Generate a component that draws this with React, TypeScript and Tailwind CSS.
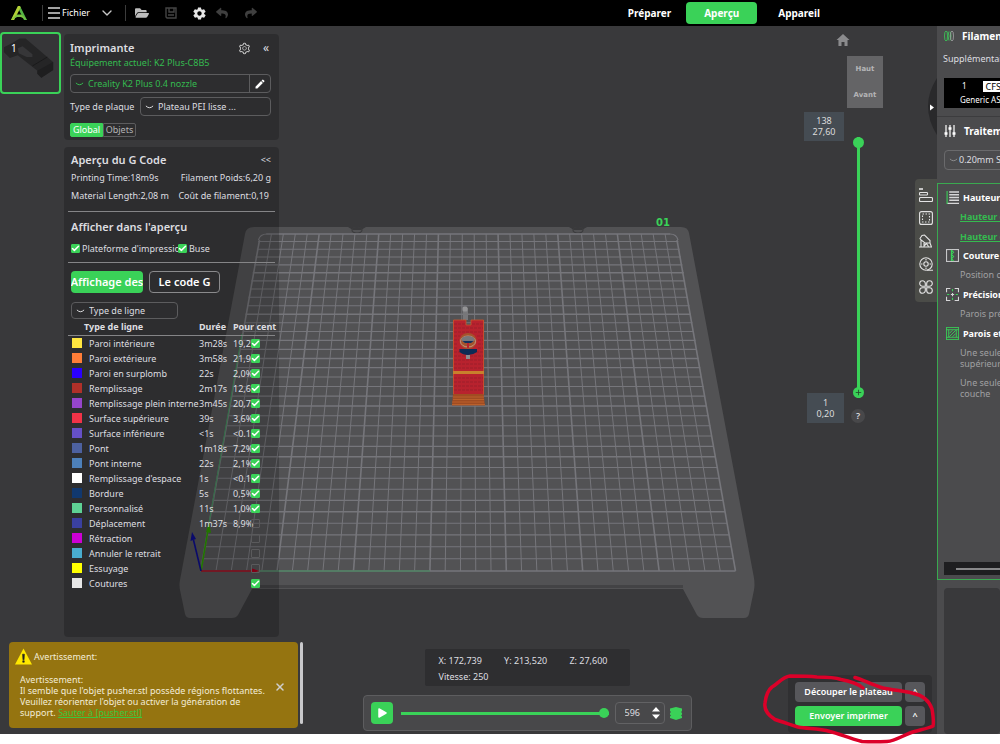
import clsx from 'clsx';
import { Check, ChevronDown, X } from 'lucide-react';
import React, { useState } from 'react';
import { AiOutlineSetting } from 'react-icons/ai';
import { FaFolderOpen, FaReply, FaShare } from 'react-icons/fa';
import { IoMdHome, IoMdSettings } from 'react-icons/io';
import { MdEdit } from 'react-icons/md';

type LineType = {
  label: string;
  color: string;
  time?: string;
  percent?: string;
  shown: boolean;
};

const lineTypes: LineType[] = [
  { label: 'Paroi intérieure', color: 'bg-[#ffe640]', time: '3m28s', percent: '19,2%', shown: true },
  { label: 'Paroi extérieure', color: 'bg-[#ff7d38]', time: '3m58s', percent: '21,9%', shown: true },
  { label: 'Paroi en surplomb', color: 'bg-[#2a00ff]', time: '22s', percent: '2,0%', shown: true },
  { label: 'Remplissage', color: 'bg-[#b03029]', time: '2m17s', percent: '12,6%', shown: true },
  { label: 'Remplissage plein interne', color: 'bg-[#9645cc]', time: '3m45s', percent: '20,7%', shown: true },
  { label: 'Surface supérieure', color: 'bg-[#f03347]', time: '39s', percent: '3,6%', shown: true },
  { label: 'Surface inférieure', color: 'bg-[#6650c7]', time: '<1s', percent: '<0.1%', shown: true },
  { label: 'Pont', color: 'bg-[#4d619f]', time: '1m18s', percent: '7,2%', shown: true },
  { label: 'Pont interne', color: 'bg-[#4d80ba]', time: '22s', percent: '2,1%', shown: true },
  { label: "Remplissage d'espace", color: 'bg-white', time: '1s', percent: '<0.1%', shown: true },
  { label: 'Bordure', color: 'bg-[#11386e]', time: '5s', percent: '0,5%', shown: true },
  { label: 'Personnalisé', color: 'bg-[#5ed194]', time: '11s', percent: '1,0%', shown: true },
  { label: 'Déplacement', color: 'bg-[#3a40a0]', time: '1m37s', percent: '8,9%', shown: false },
  { label: 'Rétraction', color: 'bg-[#cd00d6]', shown: false },
  { label: 'Annuler le retrait', color: 'bg-[#49adcf]', shown: false },
  { label: 'Essuyage', color: 'bg-[#ffff00]', shown: false },
  { label: 'Coutures', color: 'bg-[#e6e6e6]', shown: true },
];

const CELLS = 35;
const FAR = { y: 234, left: 259.5, right: 677 };
const NEAR = { y: 571, left: 200.7, right: 735.5 };

// y of the n-th row line, counted from the far edge of the bed
function rowY(n: number) {
  const t = n / CELLS;
  const far = FAR.right - FAR.left;
  const near = NEAR.right - NEAR.left;
  const w = 1 / ((1 - t) / far + t / near);
  return FAR.y + ((w - far) / (near - far)) * (NEAR.y - FAR.y);
}

function lerp(a: number, b: number, t: number) {
  return a + (b - a) * t;
}

function Scene() {
  const steps = Array.from({ length: CELLS + 1 }, (_, i) => i);
  return (
    <svg
      className="absolute inset-0 h-full w-full"
      viewBox="0 26 1000 708"
      preserveAspectRatio="xMidYMid slice"
      aria-hidden="true"
    >
      <path
        d="M254 227H348L353 230H361L366 227H569L574 230H582L587 227H681Q688 227 689 233L754 578Q755 585 754 590L749 614Q748 618 744 618H703Q699 618 697 615L683 589H252L238 615Q236 618 232 618H190Q186 618 185 614L180 590Q179 585 180 580L245 234Q246 227 254 227Z"
        fill="#525254"
      />
      <path d="M252 585H683V588H252Z" fill="#434345" />
      <ellipse cx="357" cy="230" rx="5" ry="3" fill="none" stroke="#3c3c3e" strokeWidth="1.2" />
      <ellipse cx="578" cy="230" rx="5" ry="3" fill="none" stroke="#3c3c3e" strokeWidth="1.2" />
      <g stroke="#76767b">
        {steps.map((i) => {
          const t = i / CELLS;
          return (
            <line
              key={`c${i}`}
              x1={lerp(FAR.left, FAR.right, t)}
              y1={i === 0 || i === CELLS ? 240 : FAR.y}
              x2={lerp(NEAR.left, NEAR.right, t)}
              y2={NEAR.y}
              strokeWidth={i % 5 === 0 ? 1.6 : 1}
            />
          );
        })}
        {steps.map((i) => {
          const y = rowY(i);
          const t = (y - FAR.y) / (NEAR.y - FAR.y);
          const inset = i === 0 ? 7 : 0;
          return (
            <line
              key={`r${i}`}
              x1={lerp(FAR.left, NEAR.left, t) + inset}
              y1={y}
              x2={lerp(FAR.right, NEAR.right, t) - inset}
              y2={y}
              strokeWidth={i % 5 === 0 ? 1.5 : 1.1}
            />
          );
        })}
        <path d="M258.5 240Q260 234 267 234M678 240Q676.500 234 670 234" fill="none" strokeWidth="1.2" />
      </g>
      <path d="M200.700 571L242 334M200 571H430" stroke="#3d8a58" strokeWidth="1" />
      <path d="M201 571L208 530" stroke="#2c9000" strokeWidth="1.600" />
      <path d="M206 532L209 522L211 533Z" fill="#2c9000" />
      <path d="M201 571H256" stroke="#a3001c" strokeWidth="1.600" />
      <path d="M252 568.500L260 571L252 573Z" fill="#a3001c" />
      <path d="M201 571L193.500 540" stroke="#0d0d86" strokeWidth="1.600" />
      <path d="M190.500 541L192 532L196 539Z" fill="#0d0d86" />
      <text
        x="656"
        y="226"
        fontSize="10"
        fontWeight="700"
        fill="#3ad258"
        className="font-['DejaVu_Sans',sans-serif]"
      >
        01
      </text>

      <rect x="463" y="308" width="5" height="12" fill="#77777a" />
      <rect x="462.500" y="306.500" width="5" height="5" rx="1.500" fill="#949496" />
      <path d="M453 320H466V325H471V320H484V395H453Z" fill="#b8222e" />
      <path
        d="M454 324H466M472 324H483M454 328H483M454 332H483M454 336H460M477 336H483M454 340H459M478 340H483M454 344H458M478 344H483M454 348H458M478 348H483M454 352H460M476 352H483M454 356H483M454 360H483M454 364H483M454 368H483M454 378H483M454 382H483M454 386H483M454 390H483"
        stroke="#9c1f2b"
        strokeWidth="1"
        strokeDasharray="3 1"
      />
      <path d="M453.500 395V320H466V325H471V320H483.500V395" fill="none" stroke="#c9552c" strokeWidth=".8" />
      <ellipse cx="468" cy="341" rx="8.500" ry="8" fill="#a4532c" />
      <path d="M459.500 349H477V352Q473 355 468 355Q463 355 459.500 352Z" fill="#0d2b55" />
      <ellipse cx="468" cy="341.500" rx="7.500" ry="5.500" fill="none" stroke="#c9a39a" strokeWidth=".8" />
      <ellipse cx="468" cy="339.500" rx="6.500" ry="3.500" fill="#77777a" />
      <path d="M462.500 341H473.500L471 343H465Z" fill="#12305c" />
      <path d="M468 343V348" stroke="#b8222e" strokeWidth="2" />
      <rect x="466" y="355" width="4" height="4" fill="#8d8d90" />
      <rect x="453" y="371" width="31" height="3" fill="#c8802c" />
      <path d="M453 394H483.500L485 405.500H452Z" fill="#a04c22" />
      <path d="M453 397H484M453 399.500H484M452 402H484M452 404.500H485" stroke="#c7692e" strokeWidth=".7" />
    </svg>
  );
}

function Logo() {
  return (
    <svg viewBox="0 0 16 14" className="h-[14px] w-4" aria-hidden="true">
      <path d="M7 0H9L16 14H13L8 4L3 14H0Z" fill="#55b445" />
      <path d="M7 0H9L9.500 1.500L3 14H0Z" fill="#b5cf35" />
      <path d="M0 14L5.500 8.500H10.500L16 14L9.800 11H6.200Z" fill="#7cc242" />
    </svg>
  );
}

function Caret({ className }: { className?: string }) {
  return (
    <svg viewBox="0 0 10 4" className={clsx('h-1 w-[9px]', className)} fill="none" aria-hidden="true">
      <path d="M1 .8Q5 4.800 9 .8" stroke="currentColor" strokeWidth="1.100" />
    </svg>
  );
}

function Select({
  label,
  value,
  className,
}: {
  label: string;
  value: string;
  className?: string;
}) {
  return (
    <div className={clsx('relative flex items-center', className)}>
      <Caret className="pointer-events-none absolute left-1" />
      <select
        aria-label={label}
        defaultValue={value}
        className="h-full w-full appearance-none bg-transparent pl-[17px] outline-none"
      >
        <option>{value}</option>
      </select>
    </div>
  );
}

function Tick({
  checked,
  label,
  id,
}: {
  checked: boolean;
  label?: string;
  id?: string;
}) {
  return (
    <span className="grid h-[9px] w-[9px] shrink-0">
      <input
        id={id}
        type="checkbox"
        aria-label={label}
        defaultChecked={checked}
        className="peer col-start-1 row-start-1 h-[9px] w-[9px] appearance-none rounded-[1px] border border-[#5a5a5c] checked:border-[#3ad258] checked:bg-[#3ad258]"
      />
      <Check
        strokeWidth={4}
        className="pointer-events-none invisible col-start-1 row-start-1 h-[9px] w-[9px] text-white peer-checked:visible"
      />
    </span>
  );
}

function Header() {
  return (
    <header className="flex h-[26px] shrink-0 items-center bg-black text-white">
      <div className="flex flex-1 items-center pl-[11px]">
        <Logo />
        <span className="ml-[15px] h-4 w-px bg-[#3c3c3c]" />
        <button className="ml-[5px] flex items-center gap-[2px]">
          <svg viewBox="0 0 12 12" className="h-3 w-3" stroke="#d8d8d8" strokeWidth="1.400">
            <path d="M0 1H12M0 6H12M0 11H12" />
          </svg>
          Fichier
        </button>
        <button aria-label="Plus" className="ml-[9px]">
          <ChevronDown className="h-[16px] w-[16px] text-[#c8c8c8]" />
        </button>
        <span className="ml-[10px] h-4 w-px bg-[#3c3c3c]" />
        <button aria-label="Ouvrir" className="ml-[9px]">
          <FaFolderOpen className="h-[14px] w-[14px] text-[#bdbdbd]" />
        </button>
        <button aria-label="Enregistrer" className="ml-4">
          <svg viewBox="0 0 12 12" className="h-3 w-3" fill="none" stroke="#444" strokeWidth="1.400">
            <path d="M1 1H11V11H2L1 10Z" />
            <path d="M4 1V5H9V1M3 8H9" />
          </svg>
        </button>
        <button aria-label="Paramètres" className="ml-[15px]">
          <IoMdSettings className="h-[15px] w-[15px] text-[#e6e6e6]" />
        </button>
        <button aria-label="Annuler" className="ml-2">
          <FaReply className="h-3 w-[14px] text-[#3f3f3f]" />
        </button>
        <button aria-label="Rétablir" className="ml-[15px]">
          <FaShare className="h-3 w-[14px] text-[#3f3f3f]" />
        </button>
      </div>
      <nav className="mr-[180px] flex items-center text-[10px] font-bold">
        <a href="#preparer" className="px-[15px]">
          Préparer
        </a>
        <a
          href="#apercu"
          className="flex h-[22px] w-[71px] items-center justify-center rounded-sm bg-[#3ad258]"
        >
          Aperçu
        </a>
        <a href="#appareil" className="pl-[21px]">
          Appareil
        </a>
      </nav>
    </header>
  );
}

function PlateThumb() {
  return (
    <button className="relative mt-[6px] h-[62px] w-[61px] shrink-0 rounded-sm border-2 border-[#3ad258] bg-[#363638]">
      <svg viewBox="0 0 58 58" className="h-full w-full" aria-hidden="true">
        <path d="M2 18V13L10 9L18 4L24 4L52 28V36L40 44L36 40V37L16 21L8 24Z" fill="#252526" />
        <path d="M16 14L21 12L31 20L31 23L25 23L17 19Z" fill="#363638" />
        <path d="M36 37L52 28V36L40 44L36 40Z" fill="#1e1e1f" />
        <path d="M31 32L46 23" stroke="#1a1a1b" />
      </svg>
      <span className="absolute left-[9px] top-[6px] text-[10px] leading-4 text-white">1</span>
    </button>
  );
}

function PrinterPanel() {
  const [tab, setTab] = useState('Global');
  return (
    <section className="rounded-sm bg-black/20 pb-[3px] pl-[6px] pr-2 pt-1">
      <div className="flex h-5 items-center pr-[2px]">
        <h2 className="flex-1 text-[11px] font-semibold">Imprimante</h2>
        <button aria-label="Réglages de l'imprimante">
          <AiOutlineSetting className="h-[13px] w-[13px] text-[#c4c4c4]" />
        </button>
        <button aria-label="Réduire" className="ml-3 text-[12px] leading-3">
          «
        </button>
      </div>
      <p className="h-[10px] leading-[10px] text-[#35bb50]">Équipement actuel: K2 Plus-C8B5</p>
      <div className="mt-[6px] flex h-[19px] rounded-sm border border-[#5c5c5e]">
        <Select
          label="Imprimante"
          value="Creality K2 Plus 0.4 nozzle"
          className="flex-1 text-[#35bb50]"
        />
        <button
          aria-label="Modifier"
          className="flex w-[21px] items-center justify-center border-l border-[#5c5c5e]"
        >
          <MdEdit className="h-3 w-3 text-white" />
        </button>
      </div>
      <div className="mt-1 flex h-[19px] items-center">
        <span className="w-[70px]">Type de plaque</span>
        <Select
          label="Type de plaque"
          value="Plateau PEI lisse ..."
          className="h-full flex-1 rounded-sm border border-[#5c5c5e]"
        />
      </div>
      <div className="mt-[7px] flex h-[14px]">
        {['Global', 'Objets'].map((t) => (
          <button
            key={t}
            onClick={() => setTab(t)}
            className={clsx(
              'w-[33px] border leading-3 first:rounded-l-xs last:rounded-r-xs',
              tab === t
                ? 'border-[#3ad258] bg-[#3ad258] text-white'
                : 'border-[#5c5c5e] text-[#b4b4b6]'
            )}
          >
            {t}
          </button>
        ))}
      </div>
    </section>
  );
}

function GCodePanel() {
  return (
    <section className="mt-[7px] flex-1 rounded-sm bg-black/20 px-1 pt-1">
      <div className="flex h-[18px] items-center justify-between pl-[3px] pr-1">
        <h2 className="text-[11px] font-semibold">Aperçu du G Code</h2>
        <button className="leading-3">&lt;&lt;</button>
      </div>
      <div className="flex h-[18px] items-center justify-between pl-[3px] pr-1">
        <span>Printing Time:18m9s</span>
        <span>Filament Poids:6,20 g</span>
      </div>
      <div className="flex h-[18px] items-center justify-between pl-[3px] pr-[6px]">
        <span>Material Length:2,08 m</span>
        <span>Coût de filament:0,19</span>
      </div>
      <hr className="mt-[6px] border-[#858587]" />
      <h3 className="flex h-[30px] items-center pl-[3px] text-[11px] font-semibold">
        Afficher dans l'aperçu
      </h3>
      <div className="flex h-[13px] items-center pl-[3px]">
        <Tick id="show-bed" checked />
        <label htmlFor="show-bed" className="w-[98px] overflow-hidden whitespace-nowrap pl-[2px]">
          Plateforme d'impression
        </label>
        <Tick id="show-nozzle" checked />
        <label htmlFor="show-nozzle" className="pl-[2px]">
          Buse
        </label>
      </div>
      <hr className="mt-[7px] border-[#858587]" />
      <div className="mt-2 flex h-[22px] gap-[6px] pl-[3px] text-[11px] font-semibold text-white">
        <button className="flex w-[72px] items-center justify-center overflow-hidden whitespace-nowrap rounded-sm bg-[#3ad258]">
          Affichage des
        </button>
        <button className="w-[71px] rounded-sm border border-[#8a8a8c]">Le code G</button>
      </div>
      <Select
        label="Mode de couleur"
        value="Type de ligne"
        className="ml-[3px] mt-[9px] h-[17px] w-[107px] rounded-sm border border-[#5c5c5e]"
      />
      <table className="w-full table-fixed border-collapse whitespace-nowrap text-left">
        <colgroup>
          <col className="w-[21px]" />
          <col className="w-[110px]" />
          <col className="w-[34px]" />
          <col className="w-[18px]" />
          <col />
        </colgroup>
        <thead>
          <tr className="h-[16px] border-b border-[#858587]">
            <th colSpan={2} className="p-0 pl-4 font-bold leading-[15px]">
              Type de ligne
            </th>
            <th className="p-0 font-bold leading-[15px]">Durée</th>
            <th colSpan={2} className="p-0 font-bold leading-[15px]">
              Pour cent
            </th>
          </tr>
        </thead>
        <tbody>
          {lineTypes.map((l) => (
            <tr key={l.label} className="h-[15px]">
              <td className="p-0 pl-1">
                <span className={clsx('block h-[10px] w-[10px]', l.color)} />
              </td>
              <td className="p-0 leading-[15px]">{l.label}</td>
              <td className="p-0 leading-[15px]">{l.time}</td>
              <td className="p-0 leading-[15px]">{l.percent}</td>
              <td className="p-0">
                <Tick checked={l.shown} label={l.label} />
              </td>
            </tr>
          ))}
        </tbody>
      </table>
    </section>
  );
}

function Toast() {
  return (
    <div className="mb-[6px] mt-[5px] flex gap-[2px]">
      <div
        role="alert"
        className="relative ml-[9px] h-[86px] flex-1 rounded-sm bg-[#957410] pl-[11px] pt-[6px] text-[#f3ecd8]"
      >
        <div className="-ml-[5px] flex items-center gap-[2px]">
          <svg viewBox="0 0 18 17" className="h-[17px] w-[17px]" aria-hidden="true">
            <path d="M9 0L18 17H0Z" fill="#ffe800" />
            <path d="M8 6H10L9.600 12H8.400ZM8.200 13H9.800V14.600H8.200Z" fill="#222" stroke="#222" strokeWidth=".6" />
          </svg>
          Avertissement:
        </div>
        <p className="mt-[9px] whitespace-nowrap leading-[11px]">
          Avertissement:
          <br />
          Il semble que l'objet pusher.stl possède régions flottantes.
          <br />
          Veuillez réorienter l'objet ou activer la génération de
          <br />
          support.{' '}
          <a href="#pusher" className="text-[#3ac83c] underline">
            Sauter à [pusher.stl]
          </a>
        </p>
        <button aria-label="Fermer" className="absolute right-3 top-[39px]">
          <X strokeWidth={3} className="h-[12px] w-[12px] text-[#cfcfcf]" />
        </button>
      </div>
      <span className="h-[82px] w-[3px] rounded-full bg-[#c9c9cb]" />
    </div>
  );
}

function Playback() {
  return (
    <div className="flex flex-1 flex-col items-center justify-end pb-[3px]">
      <div className="h-[37px] w-[205px] rounded-xs bg-[#2e2e30] px-[14px] pt-1">
        <div className="flex h-4 items-center justify-between pr-2">
          <span>X: 172,739</span>
          <span>Y: 213,520</span>
          <span>Z: 27,600</span>
        </div>
        <div className="flex h-4 items-center">Vitesse: 250</div>
      </div>
      <div className="mt-[9px] flex h-[36px] w-[329px] items-center rounded-sm border border-[#5d5d5f] bg-[#48484a] pl-[7px] pr-[9px]">
        <button
          aria-label="Lecture"
          className="flex h-[22px] w-[22px] items-center justify-center rounded-sm bg-[#3ad258]"
        >
          <svg viewBox="0 0 10 10" className="h-[10px] w-[10px]" aria-hidden="true">
            <path d="M2 1L9 5L2 9Z" fill="white" stroke="white" strokeWidth="1.500" strokeLinejoin="round" />
          </svg>
        </button>
        <input
          type="range"
          aria-label="Progression"
          defaultValue={100}
          className="ml-2 h-[10px] min-w-0 flex-1 appearance-none bg-transparent [&::-webkit-slider-runnable-track]:h-[3px] [&::-webkit-slider-runnable-track]:bg-[#3ad258] [&::-webkit-slider-thumb]:-mt-[4px] [&::-webkit-slider-thumb]:h-[10px] [&::-webkit-slider-thumb]:w-[10px] [&::-webkit-slider-thumb]:appearance-none [&::-webkit-slider-thumb]:rounded-full [&::-webkit-slider-thumb]:bg-[#3ad258]"
        />
        <div className="ml-[6px] flex h-[22px] w-[50px] items-center rounded-sm border border-[#626264] pr-1">
          <input
            aria-label="Étape"
            defaultValue="596"
            className="w-full min-w-0 bg-transparent pl-[9px] outline-none"
          />
          <svg viewBox="0 0 8 12" className="h-3 w-2 shrink-0" fill="white" aria-hidden="true">
            <path d="M4 0L8 4.500H0ZM4 12L8 7.500H0Z" />
          </svg>
        </div>
        <button aria-label="Couches" className="ml-[5px]">
          <svg viewBox="0 0 12 13" className="h-[13px] w-3" fill="#3ad258" aria-hidden="true">
            <path d="M6 0L12 1.500V4L11 5L12 6V7.500L11 8.500L12 9.500V11L6 13L0 11V9.500L1 8.500L0 7.500V6L1 5L0 4V1.500Z" />
          </svg>
        </button>
      </div>
    </div>
  );
}

const iconProps = {
  viewBox: '0 0 14 14',
  className: 'h-[14px] w-[14px]',
  fill: 'none',
  stroke: '#e4e4e4',
  strokeWidth: 1.1,
};

function ToolStrip() {
  return (
    <div className="mt-[44px] flex h-[123px] w-full flex-col items-center gap-[9px] rounded-l-sm bg-[#4b4c48] pt-[9px]">
      <button aria-label="Couches">
        <svg {...iconProps}>
          <path d="M0 1H4" strokeWidth="1.600" />
          <rect x=".5" y="4.500" width="8" height="2.500" rx=".8" />
          <rect x=".5" y="9.500" width="13" height="4" rx="1" />
        </svg>
      </button>
      <button aria-label="Plateau">
        <svg {...iconProps}>
          <rect x=".6" y=".6" width="12.800" height="12.800" rx="2" />
          <rect x="3.500" y="3" width="7" height="8" strokeDasharray="1.500 1.500" />
        </svg>
      </button>
      <button aria-label="Supports">
        <svg {...iconProps}>
          <path d="M1 4.500L3 1.500L5.500 1L11 6.500V9H6L1.500 5.500ZM0 13H13M2 6V13M5 9V13M11 9L12.500 13M5 12L7.500 9.500L9.500 12.500" />
        </svg>
      </button>
      <button aria-label="Bobine">
        <svg {...iconProps}>
          <circle cx="7" cy="7" r="6.200" />
          <circle cx="7" cy="7" r="2.200" />
          <path d="M7 2V3.500M7 10.500V12M2 7H3.500M10.500 7H12M8 13.200H14" />
        </svg>
      </button>
      <button aria-label="Autres">
        <svg {...iconProps}>
          <path d="M6.300 6.300H3.500A2.800 2.800 0 1 1 6.300 3.500ZM7.700 6.300V3.500A2.800 2.800 0 1 1 10.500 6.300ZM6.300 7.700V10.500A2.800 2.800 0 1 1 3.500 7.700ZM7.700 7.700H10.500A2.800 2.800 0 1 1 7.700 10.500Z" />
        </svg>
      </button>
    </div>
  );
}

function LayerSlider() {
  return (
    <div className="ml-[53px] mt-1 flex">
      <div className="flex w-10 flex-col items-end justify-between text-center leading-[11px] text-[#dcdcdc]">
        <div className="w-full bg-[#454c53] pb-1 pt-[3px]">
          138
          <br />
          27,60
        </div>
        <div className="w-[37px] bg-[#454c53] py-1">
          1
          <br />
          0,20
        </div>
      </div>
      <div className="flex w-7 flex-col items-center pt-[25px]">
        <div className="relative flex h-[261px] w-3 justify-center">
          <input
            type="range"
            aria-label="Couche"
            min={1}
            max={138}
            defaultValue={138}
            className="h-full w-[10px] appearance-none bg-transparent [direction:rtl] [writing-mode:vertical-lr] [&::-webkit-slider-runnable-track]:w-[3px] [&::-webkit-slider-runnable-track]:bg-[#3ad258] [&::-webkit-slider-thumb]:-ml-[4px] [&::-webkit-slider-thumb]:h-[11px] [&::-webkit-slider-thumb]:w-[11px] [&::-webkit-slider-thumb]:appearance-none [&::-webkit-slider-thumb]:rounded-full [&::-webkit-slider-thumb]:bg-[#3ad258]"
          />
          <svg viewBox="0 0 10 10" className="pointer-events-none absolute bottom-0 h-[11px] w-[11px]">
            <circle cx="5" cy="5" r="5" fill="#3ad258" />
            <path d="M5 2.500V7.500M2.500 5H7.500" stroke="#24522d" strokeWidth=".8" />
          </svg>
        </div>
        <button className="mt-[11px] h-[14px] w-[14px] rounded-full bg-[#48484a] font-semibold leading-[14px]">
          ?
        </button>
      </div>
    </div>
  );
}

function ViewTools() {
  return (
    <div className="flex w-[186px] shrink-0 flex-col justify-between">
      <div className="flex">
        <div className="flex-1 pt-[6px]">
          <button aria-label="Vue par défaut" className="ml-[84px] block">
            <IoMdHome className="h-4 w-4 text-[#8b8b8d]" />
          </button>
          <div className="ml-[96px] mt-2 flex h-[52px] w-9 flex-col items-center justify-around bg-[#646466] font-['DejaVu_Sans',sans-serif] text-[7px] font-bold text-[#b4b4b6]">
            <span>Haut</span>
            <span>Avant</span>
          </div>
          <LayerSlider />
        </div>
        <div className="flex w-[22px] flex-col items-end pt-[52px]">
          <button aria-label="Replier le panneau">
            <svg viewBox="0 0 9 57" className="h-[57px] w-[9px]">
              <path d="M9 0Q0 14 0 28Q0 43 9 57Z" fill="#29292b" />
              <path d="M2 26.500L6 29.500L2 32.500Z" fill="white" />
            </svg>
          </button>
          <ToolStrip />
        </div>
      </div>
      <div className="mb-px mr-[5px] grid grid-cols-[107px_20px] gap-x-[3px] gap-y-1 self-end rounded-sm bg-[#303032] p-[7px] font-semibold text-white">
        <button className="h-5 rounded-sm bg-[#57575b]">Découper le plateau</button>
        <button aria-label="Options de découpe" className="rounded-sm bg-[#57575b]">
          ^
        </button>
        <button className="h-5 rounded-sm bg-[#3ad258]">Envoyer imprimer</button>
        <button aria-label="Options d'envoi" className="rounded-sm bg-[#57575b]">
          ^
        </button>
      </div>
    </div>
  );
}

const groupIcon = {
  viewBox: '0 0 12 12',
  className: 'h-[13px] w-[13px] shrink-0',
  fill: 'none',
};

function Group({ icon, title }: { icon: React.ReactNode; title: string }) {
  return (
    <h3 className="flex h-[19px] items-center gap-[4px] font-bold text-white">
      {icon}
      {title}
    </h3>
  );
}

function SettingsPanel() {
  return (
    <aside className="flex w-[63px] shrink-0 flex-col overflow-hidden whitespace-nowrap bg-[#4b4b4d]">
      <div className="border-b border-[#3c3c3e] pb-2 pl-[7px]">
        <h2 className="flex h-5 items-center gap-2 text-[10px] font-bold text-white">
          <svg viewBox="0 0 10 12" className="h-3 w-[10px] shrink-0" fill="none">
            <ellipse cx="2" cy="6" rx="1.500" ry="5" stroke="#3ad258" strokeWidth=".8" />
            <path d="M4 1.500Q6 6 4 10.500M6 1.500Q8 6 6 10.500" stroke="#3ad258" strokeWidth=".8" />
            <ellipse cx="8" cy="6" rx="1.500" ry="5" stroke="#a5a5a7" strokeWidth=".8" />
          </svg>
          Filament
        </h2>
        <p className="-ml-px mt-1 h-[18px] leading-[18px]">Supplémentaire</p>
        <div className="mt-[10px] h-[30px] bg-black pl-4 text-[8px] text-white">
          <div className="flex h-4 items-center gap-4 pl-[2px]">
            <span>1</span>
            <span className="bg-white px-[3px] text-[9px] leading-[11px] text-black">CFS</span>
          </div>
          <div className="leading-3">Generic ASA</div>
        </div>
      </div>
      <div className="pb-[13px] pl-[7px] pt-1">
        <h2 className="flex h-5 items-center gap-2 text-[10px] font-bold text-white">
          <svg viewBox="0 0 12 12" className="h-3 w-3 shrink-0" stroke="white">
            <path d="M2 0V12M6 0V12M10 0V12" strokeWidth="1.200" />
            <path d="M0.500 8.500H3.500M4.500 3.500H7.500M8.500 8.500H11.500" strokeWidth="2.400" />
          </svg>
          Traitement
        </h2>
        <Select
          label="Profil de traitement"
          value="0.20mm Standard"
          className="mt-[9px] h-5 w-[140px] rounded-sm border border-[#6a6a6c] [&>select]:pl-[14px] [&>svg]:text-[#8d8d8f]"
        />
      </div>
      <div className="flex h-[397px] flex-col border-b border-l border-t border-[#3aa950] pb-1 pl-2 pt-1">
        <Group
          title="Hauteur de couche"
          icon={
            <svg {...groupIcon}>
              <path d="M3 1H12M3 3.500H12M3 6H12M3 8.500H12M1 11.500H12" stroke="#d6d6d8" strokeWidth="1.400" />
              <path d="M1 0V12" stroke="#3ad258" />
            </svg>
          }
        />
        <div className="flex flex-col pl-[14px] font-bold text-[#35bb50] underline">
          <a href="#hauteur" className="h-5 leading-5">
            Hauteur de couche
          </a>
          <a href="#hauteur-initiale" className="h-[19px] leading-[19px]">
            Hauteur de la couche initiale
          </a>
        </div>
        <Group
          title="Couture"
          icon={
            <svg {...groupIcon}>
              <rect x=".5" y=".5" width="11" height="11" stroke="#c6c6c8" />
              <path d="M5 1L7 3L5 5L7 7L5 9L7 11M5 1V11" stroke="#3ad258" />
            </svg>
          }
        />
        <p className="h-5 pl-[14px] leading-5 text-[#a0a0a2]">Position de la couture</p>
        <Group
          title="Précision"
          icon={
            <svg {...groupIcon}>
              <path d="M.5 4V.5H4M8 .5H11.500V4M11.500 8V11.500H8M4 11.500H.5V8M6 4.500V7.500M4.500 6H7.500" stroke="#d6d6d8" />
              <path d="M6 1V3M6 9V11M1 6H3M9 6H11" stroke="#3ad258" />
            </svg>
          }
        />
        <p className="h-5 pl-[14px] leading-5 text-[#a0a0a2]">Parois précises</p>
        <Group
          title="Parois et surfaces"
          icon={
            <svg {...groupIcon} stroke="#3ad258" strokeWidth=".8">
              <path d="M0 .5H12M0 2.500H12M0 9.500H12M0 11.500H12M.5 .5V11.500M11.500 .5V11.500M2.500 2.500V9.500M9.500 2.500V9.500M3 6L6 3M3 9L9 3M6 9L9 6" />
            </svg>
          }
        />
        <p className="mt-1 pl-[14px] leading-[11px] text-[#a0a0a2]">
          Une seule paroi
          <br />
          supérieure
        </p>
        <p className="mt-2 pl-[14px] leading-[11px] text-[#a0a0a2]">
          Une seule paroi
          <br />
          couche
        </p>
        <div className="-ml-[2px] mt-auto flex h-[13px] shrink-0 items-center bg-[#1e1e20] pl-3">
          <span className="h-[2px] w-full bg-[#88888a]" />
        </div>
      </div>
      <div className="ml-[7px] mt-2 flex-1 rounded-sm bg-[#39393b]" />
    </aside>
  );
}

function Annotation() {
  return (
    <svg
      viewBox="750 560 250 184"
      className="pointer-events-none absolute bottom-0 right-0 h-[184px] w-[250px]"
      fill="none"
      stroke="#dc0029"
      strokeWidth="3.500"
      strokeLinecap="round"
      strokeLinejoin="round"
      aria-hidden="true"
    >
      <path d="M855 677.500C864 680 872 685 883 688C893 690 903 691 912 693C922 695 929 700 932 709C933 715 934 722 933 726C927 729 918 730 910 733C900 737 895 741 887 741.500C878 742 870 742 862 741.500C848 738 840 734 830 731.500C818 728 808 729 798 727C789 724 782 722 775 719.500C768 715 764 709 765 703C766 695 768 690 772 687C778 684 782 677 790 676C800 676 808 676 817 677C828 677 834 677 841 679.500C850 681 858 684 863 688" />
    </svg>
  );
}

export default function App() {
  return (
    <div className="relative flex min-h-screen flex-col overflow-hidden bg-white pb-[10px] font-['Noto_Sans','Open_Sans',sans-serif] text-[9px] text-[#dedee0]">
      <Header />
      <main className="relative flex flex-1 bg-[#39393b]">
        <Scene />
        <div className="relative flex flex-1">
          <div className="flex w-[303px] shrink-0 flex-col">
            <div className="flex flex-1 gap-[3px]">
              <PlateThumb />
              <div className="flex w-[215px] flex-col pt-2">
                <PrinterPanel />
                <GCodePanel />
              </div>
            </div>
            <Toast />
          </div>
          <Playback />
          <ViewTools />
          <SettingsPanel />
        </div>
      </main>
      <Annotation />
    </div>
  );
}
